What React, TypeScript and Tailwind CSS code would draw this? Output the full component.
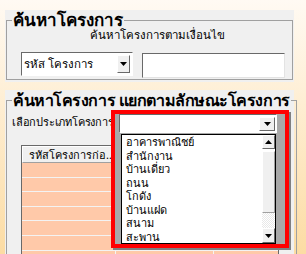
const items = ['อาคารพาณิชย์', 'สำนักงาน', 'บ้านเดี่ยว', 'ถนน', 'โกดัง', 'บ้านแฝด', 'สนาม', 'สะพาน'];

function Caret() {
  return (
    <svg width="7" height="4" viewBox="0 0 7 4">
      <path d="M0 0h7L3.5 4z" fill="#000" />
    </svg>
  );
}

function CaretUp() {
  return (
    <svg width="7" height="4" viewBox="0 0 7 4">
      <path d="M0 4h7L3.5 0z" fill="#000" />
    </svg>
  );
}

function Btn3d({ className, children }: { className: string; children?: React.ReactNode }) {
  return (
    <div
      className={`flex items-center justify-center border border-t-white border-l-white border-r-[#696969] border-b-[#696969] bg-[#f0f0f0] ${className}`}
    >
      {children}
    </div>
  );
}

export default function App() {
  return (
    <div
      className="relative h-[254px] w-[306px] overflow-hidden bg-gradient-to-b from-[#fffaf3] to-[#fcdca3] pt-[10px] text-black"
      style={{ fontFamily: '"Noto Sans", sans-serif' }}
    >
      {/* panel 1 */}
      <div className="ml-[5px] h-[72px] w-[289px] bg-[#f0f0f0] pl-[1px]">
        <fieldset className="h-[70px] w-[287px] border border-[#a0a0a0] px-[5px]">
          <legend className="whitespace-nowrap px-[1px] text-[17px] font-bold leading-[20px]">ค้นหาโครงการ</legend>
          <div className="-mt-[3px] whitespace-nowrap pl-[78px] text-[11.5px] leading-[16px]">ค้นหาโครงการตามเงื่อนไข</div>
          <div className="mt-[9px] flex items-start gap-[9px] pl-[9px]">
            <div className="flex h-[24px] w-[112px] items-center border border-t-[#696969] border-l-[#696969] border-r-white border-b-white bg-white pr-[2px]">
              <span className="flex-1 whitespace-nowrap pl-[2px] text-[11.5px] leading-none">รหัส โครงการ</span>
              <Btn3d className="h-[18px] w-[13px]">
                <Caret />
              </Btn3d>
            </div>
            <div className="mt-[1px] h-[25px] w-[143px] border border-t-[#696969] border-l-[#696969] border-r-[#e3e3e3] border-b-[#e3e3e3] bg-white" />
          </div>
        </fieldset>
      </div>

      {/* panel 2 */}
      <div className="relative ml-[5px] mt-[8px] h-[170px] w-[289px] bg-[#f0f0f0] pl-[1px]">
        <fieldset className="h-[200px] w-[286px] border border-[#a0a0a0] px-[5px]">
          <legend className="whitespace-nowrap px-[1px] text-[16px] font-bold leading-[20px] tracking-[-0.45px]">
            ค้นหาโครงการ แยกตามลักษณะโครงการ
          </legend>
          <div className="mt-[4px] whitespace-nowrap text-[11px] leading-[16px] tracking-[-0.2px]">เลือกประเภทโครงการ</div>
          {/* grid */}
          <div className="ml-[9px] mt-[15px] w-[258px] border border-[#696969] bg-[#ffc9a9]">
            <div className="flex h-[17px] bg-[#f0f0f0]">
              <div className="flex h-[17px] w-[94px] items-center overflow-hidden whitespace-nowrap border border-t-white border-l-white border-r-[#a0a0a0] border-b-[#a0a0a0] pl-[6px] text-[11px] leading-none">
                รหัสโครงการก่อ...
              </div>
              <Btn3d className="h-[17px] w-[98px]" />
              <Btn3d className="h-[17px] flex-1" />
            </div>
            {Array.from({ length: 7 }).map((_, i) => (
              <div key={i} className="flex h-[14.6px] border-b border-[#f3f3f3]">
                <div className="w-[94px] border-r border-[#f3f3f3]" />
                <div className="w-[98px] border-r border-[#f3f3f3]" />
                <div className="flex-1" />
              </div>
            ))}
          </div>
        </fieldset>

        {/* open dropdown, highlighted */}
        <div className="absolute left-[106px] top-[20px] h-[138px] w-[178px] border-[4px] border-[#ff0000] bg-[#a8a8a8] shadow-[2px_2px_0_#808080]">
          <div className="ml-[4px] flex h-[19px] w-[158px] items-center justify-end border border-t-[#696969] border-l-[#696969] border-r-white border-b-white bg-white pr-[1px]">
            <Btn3d className="h-[14px] w-[16px]">
              <Caret />
            </Btn3d>
          </div>
          <div className="ml-[6px] mt-[1px] flex h-[110px] w-[155px] border border-black bg-white">
            <div className="flex-1 pl-[4px]">
              {items.map((t) => (
                <div key={t} className="h-[13.5px] whitespace-nowrap text-[11px] leading-[13.5px]">
                  {t}
                </div>
              ))}
            </div>
            <div className="flex w-[13px] flex-col">
              <Btn3d className="h-[14px] w-[13px]">
                <CaretUp />
              </Btn3d>
              <div className="mt-[2px] h-[62px] w-[13px] border border-t-white border-l-white border-r-[#a0a0a0] border-b-[#a0a0a0] bg-[#f0f0f0]" />
              <div className="flex-1 bg-[repeating-conic-gradient(#e8e8e8_0_25%,#ffffff_0_50%)] bg-[length:2px_2px]" />
              <Btn3d className="h-[15px] w-[13px]">
                <Caret />
              </Btn3d>
            </div>
          </div>
        </div>
      </div>
    </div>
  );
}
